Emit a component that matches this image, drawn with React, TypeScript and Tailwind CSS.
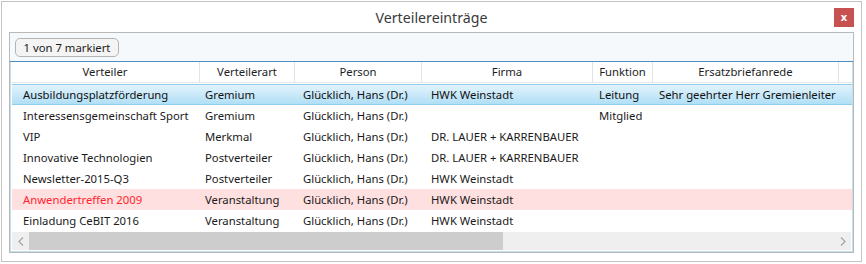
import React from "react";

const cols = [
  { name: "Verteiler", w: 189, pl: "pl-[11px]" },
  { name: "Verteilerart", w: 95, pl: "pl-[5px]" },
  { name: "Person", w: 127, pl: "pl-[8px]" },
  { name: "Firma", w: 171, pl: "pl-[9px]" },
  { name: "Funktion", w: 60, pl: "pl-[6px]" },
  { name: "Ersatzbriefanrede", w: 186, pl: "pl-[6px]" },
];

const rows: { c: string[]; kind?: "sel" | "red" }[] = [
  { c: ["Ausbildungsplatzförderung", "Gremium", "Glücklich, Hans (Dr.)", "HWK Weinstadt", "Leitung", "Sehr geehrter Herr Gremienleiter"], kind: "sel" },
  { c: ["Interessensgemeinschaft Sport", "Gremium", "Glücklich, Hans (Dr.)", "", "Mitglied", ""] },
  { c: ["VIP", "Merkmal", "Glücklich, Hans (Dr.)", "DR. LAUER + KARRENBAUER", "", ""] },
  { c: ["Innovative Technologien", "Postverteiler", "Glücklich, Hans (Dr.)", "DR. LAUER + KARRENBAUER", "", ""] },
  { c: ["Newsletter-2015-Q3", "Postverteiler", "Glücklich, Hans (Dr.)", "HWK Weinstadt", "", ""] },
  { c: ["Anwendertreffen 2009", "Veranstaltung", "Glücklich, Hans (Dr.)", "HWK Weinstadt", "", ""], kind: "red" },
  { c: ["Einladung CeBIT 2016", "Veranstaltung", "Glücklich, Hans (Dr.)", "HWK Weinstadt", "", ""] },
];

export default function App() {
  return (
    <div className="w-[866px] h-[264px] bg-white relative" style={{ fontFamily: '"Noto Sans", "Open Sans", sans-serif' }}>
      <div className="absolute left-[1px] top-[1px] w-[861px] h-[261px] border border-[#c4c4c4] bg-white flex flex-col">
        {/* title bar */}
        <div className="relative h-[30px] flex items-center justify-center shrink-0">
          <span className="text-[14.2px] text-[#3a3a3a] leading-none mt-[2px]">Verteilereinträge</span>
          <div className="absolute right-[7px] top-[6px] w-[20px] h-[19px] bg-[#c75050] flex items-center justify-center">
            <span className="text-white text-[11px] font-bold leading-none mb-[2px]">x</span>
          </div>
        </div>
        {/* panel */}
        <div className="ml-[7px] w-[845px] h-[221px] border border-[#b9b9b9] flex flex-col">
          <div className="h-[29px] bg-[#f5f9fc] shrink-0 pl-[5px] pt-[5px] border-b border-[#4a90c8]">
            <div className="w-[104px] h-[19px] rounded-[5px] border border-[#b4b4b4] bg-[#f4f4f4] flex items-center justify-center text-[11.3px] text-[#1a1a1a] leading-none">
              1 von 7 markiert
            </div>
          </div>
          <div className="flex-1 flex flex-col border-l border-r border-b border-[#c3deed] bg-white">
            {/* header */}
            <div className="flex h-[21px] shrink-0 border-b border-[#e6e6e6]">
              {cols.map((c) => (
                <div
                  key={c.name}
                  style={{ width: c.w }}
                  className="shrink-0 border-r border-[#e3e3e3] flex items-center justify-center text-[11.3px] text-[#1e1e1e] leading-none"
                >
                  {c.name}
                </div>
              ))}
            </div>
            {/* rows */}
            <div className="flex flex-col pt-[1px] pl-[1px]">
              {rows.map((r, i) => (
                <div
                  key={i}
                  className={
                    "flex h-[21px] items-center text-[11.3px] leading-none " +
                    (r.kind === "sel"
                      ? "bg-gradient-to-b from-[#e3f3fc] to-[#b0dff6] border-y border-[#8fcdee] text-[#111]"
                      : r.kind === "red"
                      ? "bg-[#ffe0e0] text-[#1a1a1a]"
                      : "text-[#1a1a1a]")
                  }
                >
                  {r.c.map((t, j) => (
                    <div
                      key={j}
                      style={{ width: j === 0 ? cols[j].w - 1 : cols[j].w }}
                      className={"shrink-0 whitespace-nowrap " + cols[j].pl + (r.kind === "red" && j === 0 ? " text-[#ff1f2f]" : "")}
                    >
                      {t}
                    </div>
                  ))}
                </div>
              ))}
            </div>
            <div className="flex-1" />
            {/* scrollbar */}
            <div className="h-[18px] mx-[1px] mb-[1px] bg-[#efefef] flex items-center">
              <div className="w-[17px] h-full flex items-center justify-center">
                <svg width="6" height="9" viewBox="0 0 6 9"><path d="M5 0.5 L1 4.5 L5 8.5" stroke="#a4a4a4" strokeWidth="1.2" fill="none" /></svg>
              </div>
              <div className="w-[474px] h-full bg-[#cdcdcd]" />
              <div className="flex-1" />
              <div className="w-[17px] h-full flex items-center justify-center">
                <svg width="6" height="9" viewBox="0 0 6 9"><path d="M1 0.5 L5 4.5 L1 8.5" stroke="#a4a4a4" strokeWidth="1.2" fill="none" /></svg>
              </div>
            </div>
          </div>
        </div>
      </div>
    </div>
  );
}
